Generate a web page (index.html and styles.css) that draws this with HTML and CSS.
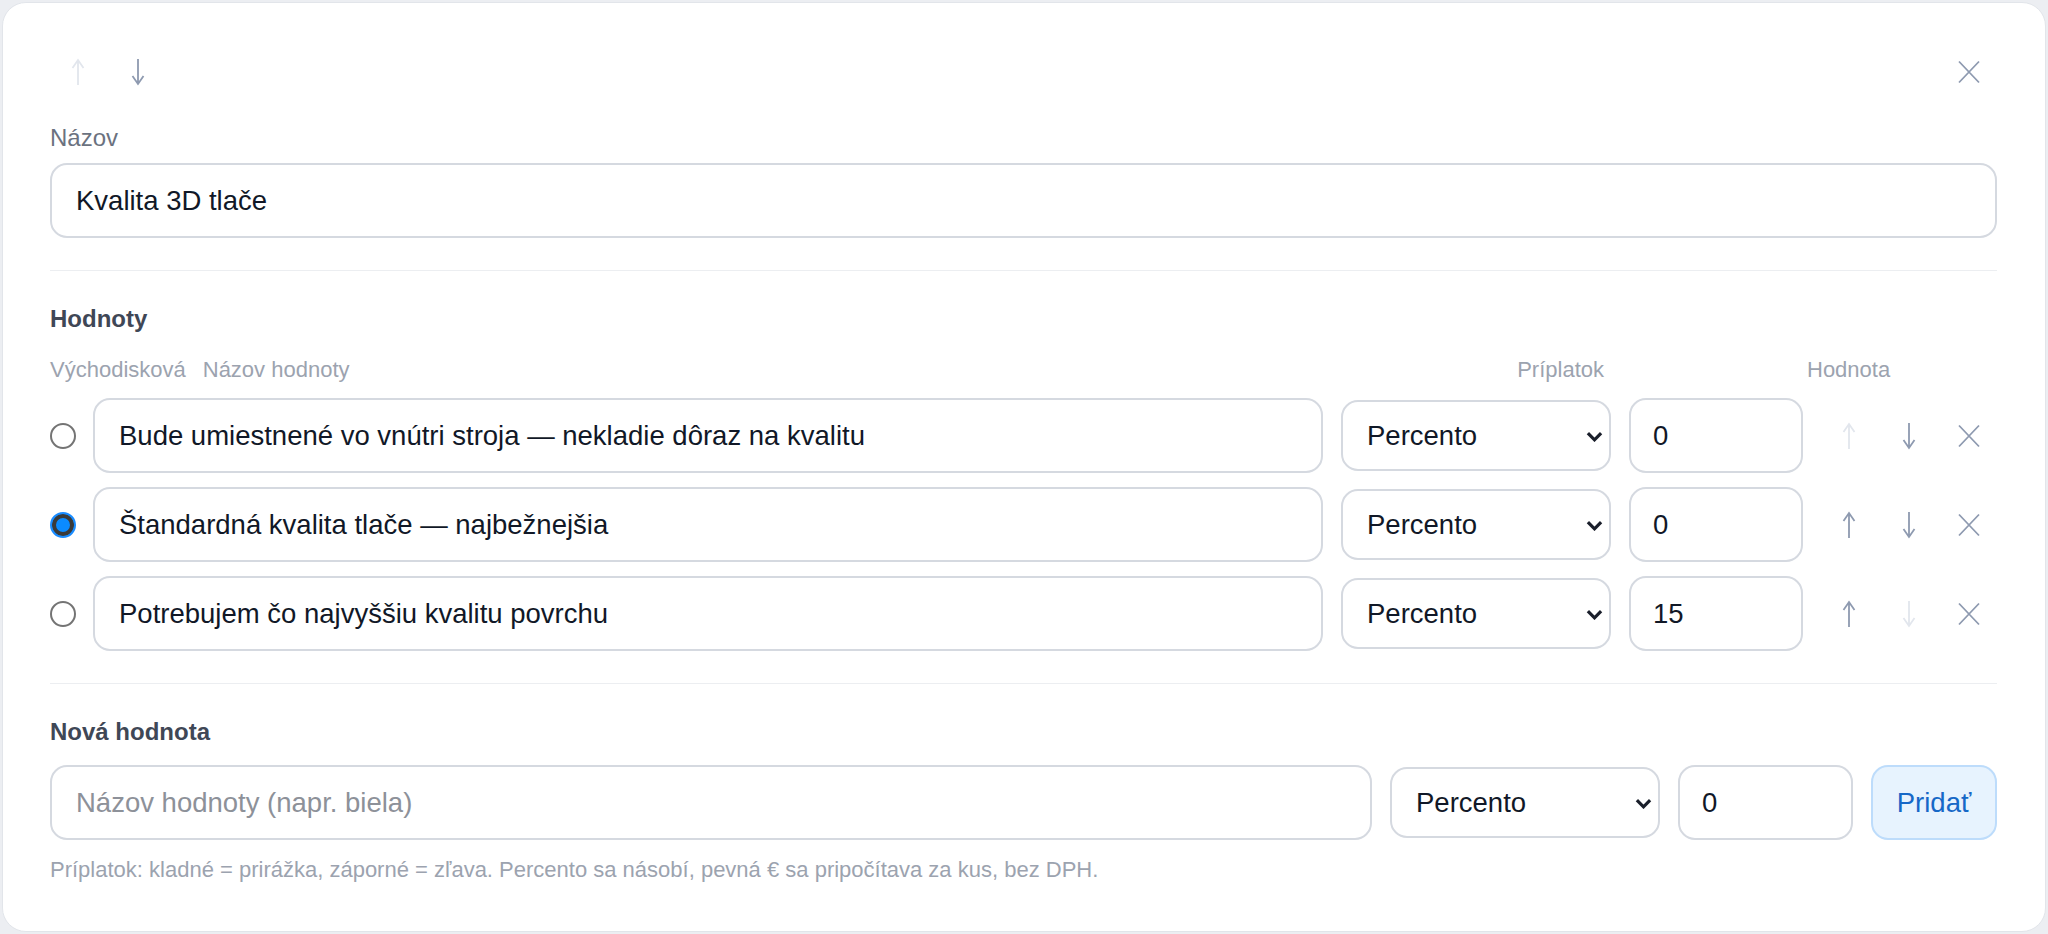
FILE: index.html
```html
<!DOCTYPE html>
<html lang="sk">
<head>
  <meta charset="UTF-8">
  <meta name="viewport" content="width=device-width, initial-scale=1.0">
  <title>Vlastnosť - Kvalita 3D tlače</title>
  <link rel="stylesheet" href="styles.css">
</head>
<body>
  <svg class="icons" xmlns="http://www.w3.org/2000/svg">
    <symbol id="i-up" viewBox="0 0 14 28">
      <path d="M7 27V2M1.5 10L7 2l5.5 8" fill="none" stroke="currentColor" stroke-width="1.8"/>
    </symbol>
    <symbol id="i-down" viewBox="0 0 14 28">
      <path d="M7 1v25M1.5 18L7 26l5.5-8" fill="none" stroke="currentColor" stroke-width="1.8"/>
    </symbol>
    <symbol id="i-close" viewBox="0 0 24 24">
      <path d="M2 1.5l20 21M22 1.5l-20 21" fill="none" stroke="currentColor" stroke-width="1.8"/>
    </symbol>
    <symbol id="i-chevron" viewBox="0 0 18 11">
      <path d="M2 2l7 7 7-7" fill="none" stroke="currentColor" stroke-width="3.4"/>
    </symbol>
  </svg>

  <div class="card">
    <div class="toolbar">
      <div class="move">
        <button class="icon-btn" disabled><svg class="arrow"><use href="#i-up"/></svg></button>
        <button class="icon-btn"><svg class="arrow"><use href="#i-down"/></svg></button>
      </div>
      <button class="icon-btn"><svg class="close"><use href="#i-close"/></svg></button>
    </div>

    <label class="field-label" for="attrName">Názov</label>
    <input class="field" id="attrName" type="text" value="Kvalita 3D tlače">

    <hr class="sep">

    <h3 class="section-title">Hodnoty</h3>
    <div class="cols">
      <span class="col-default">Východisková</span>
      <span class="col-name">Názov hodnoty</span>
      <span class="col-fee">Príplatok</span>
      <span class="col-value">Hodnota</span>
    </div>

    <div class="rows">
      <div class="row">
        <input class="radio" type="radio" name="default">
        <input class="field" type="text" value="Bude umiestnené vo vnútri stroja — nekladie dôraz na kvalitu">
        <div class="select-wrap">
          <select class="field select"><option>Percento</option><option>Pevná €</option></select>
          <svg class="chevron"><use href="#i-chevron"/></svg>
        </div>
        <input class="field num" type="number" value="0">
        <div class="actions">
          <button class="icon-btn" disabled><svg class="arrow"><use href="#i-up"/></svg></button>
          <button class="icon-btn"><svg class="arrow"><use href="#i-down"/></svg></button>
          <button class="icon-btn"><svg class="close"><use href="#i-close"/></svg></button>
        </div>
      </div>
      <div class="row">
        <input class="radio" type="radio" name="default" checked>
        <input class="field" type="text" value="Štandardná kvalita tlače — najbežnejšia">
        <div class="select-wrap">
          <select class="field select"><option>Percento</option><option>Pevná €</option></select>
          <svg class="chevron"><use href="#i-chevron"/></svg>
        </div>
        <input class="field num" type="number" value="0">
        <div class="actions">
          <button class="icon-btn"><svg class="arrow"><use href="#i-up"/></svg></button>
          <button class="icon-btn"><svg class="arrow"><use href="#i-down"/></svg></button>
          <button class="icon-btn"><svg class="close"><use href="#i-close"/></svg></button>
        </div>
      </div>
      <div class="row">
        <input class="radio" type="radio" name="default">
        <input class="field" type="text" value="Potrebujem čo najvyššiu kvalitu povrchu">
        <div class="select-wrap">
          <select class="field select"><option>Percento</option><option>Pevná €</option></select>
          <svg class="chevron"><use href="#i-chevron"/></svg>
        </div>
        <input class="field num" type="number" value="15">
        <div class="actions">
          <button class="icon-btn"><svg class="arrow"><use href="#i-up"/></svg></button>
          <button class="icon-btn" disabled><svg class="arrow"><use href="#i-down"/></svg></button>
          <button class="icon-btn"><svg class="close"><use href="#i-close"/></svg></button>
        </div>
      </div>
    </div>

    <hr class="sep">

    <h3 class="section-title">Nová hodnota</h3>
    <div class="new-row">
      <input class="field" type="text" placeholder="Názov hodnoty (napr. biela)">
      <div class="select-wrap">
        <select class="field select"><option>Percento</option><option>Pevná €</option></select>
        <svg class="chevron"><use href="#i-chevron"/></svg>
      </div>
      <input class="field num" type="number" value="0">
      <button class="btn-add">Pridať</button>
    </div>
    <p class="hint">Príplatok: kladné = prirážka, záporné = zľava. Percento sa násobí, pevná € sa pripočítava za kus, bez DPH.</p>
  </div>
</body>
</html>
```

FILE: styles.css
```css
* { box-sizing: border-box; }
body {
  margin: 0;
  padding: 2px;
  height: 100vh;
  background: #eceef2;
  font-family: 'Liberation Sans', Arial, sans-serif;
}
.icons { position: absolute; width: 0; height: 0; overflow: hidden; }

.card {
  height: 100%;
  background: #fff;
  border: 1px solid #e2e5ea;
  border-radius: 24px;
  padding: 41px 48px 0 47px;
}

/* header with move / close buttons */
.toolbar { display: flex; justify-content: space-between; align-items: center; height: 56px; }
.move { display: flex; gap: 4px; }
.icon-btn {
  width: 56px;
  height: 56px;
  padding: 0;
  border: none;
  background: none;
  color: #8e9ab0;
  display: grid;
  place-items: center;
  cursor: pointer;
}
.icon-btn:disabled { color: #e2e6ed; cursor: default; }
.arrow { width: 14px; height: 28px; }
.close { width: 24px; height: 24px; }

.field-label {
  display: block;
  margin-top: 24px;
  font-size: 24px;
  line-height: 28px;
  color: #6b7280;
}
.field {
  height: 75px;
  width: 100%;
  min-width: 0;
  padding: 0 24px;
  font-family: inherit;
  font-size: 27.5px;
  color: #111827;
  background: #fff;
  border: 2px solid #d5d9e0;
  border-radius: 17px;
  outline: none;
}
.field::placeholder { color: #8d9199; }
#attrName { margin-top: 11px; display: block; }

.sep { border: 0; border-top: 1px solid #eceef1; margin: 32px 0 0 0; }

.section-title {
  margin: 34px 0 0 0;
  font-size: 24px;
  line-height: 28px;
  font-weight: bold;
  color: #3f4756;
}

.cols {
  display: flex;
  margin-top: 24px;
  font-size: 22px;
  line-height: 26px;
  color: #9ca3af;
}
.col-default { margin-right: 17px; }
.col-name { flex: 1; }
.col-fee { width: 270px; text-align: right; padding-right: 2px; }
.col-value { width: 391px; padding-left: 201px; }

.rows { display: flex; flex-direction: column; gap: 14px; margin-top: 15px; }
.row {
  display: grid;
  grid-template-columns: 25px 1fr 270px 174px 176px;
  column-gap: 18px;
  align-items: center;
}

.radio {
  appearance: none;
  -webkit-appearance: none;
  width: 26px;
  height: 26px;
  margin: 0;
  border: 2px solid #747474;
  border-radius: 50%;
  background: #fff;
}
.radio:checked {
  border-color: #1a8cff;
  background: #0b8bff;
  box-shadow: inset 0 0 0 4px #3a3a3a;
}

.select-wrap { position: relative; }
.select {
  appearance: none;
  -webkit-appearance: none;
  height: 71px;
  display: block;
  padding-right: 50px;
}
.chevron {
  position: absolute;
  right: 8px;
  top: 31px;
  width: 17px;
  height: 11px;
  color: #1a1f2b;
  pointer-events: none;
}
.num { padding: 0 22px; -moz-appearance: textfield; }
.num::-webkit-inner-spin-button,
.num::-webkit-outer-spin-button { -webkit-appearance: none; margin: 0; }

.actions { display: flex; gap: 4px; justify-content: flex-end; }

.new-row {
  display: grid;
  grid-template-columns: 1fr 270px 175px 126px;
  column-gap: 18px;
  align-items: center;
  margin-top: 19px;
}
.btn-add {
  height: 75px;
  font-family: inherit;
  font-size: 27.5px;
  color: #1668c7;
  background: #e7f3fe;
  border: 2px solid #bddcfb;
  border-radius: 17px;
  cursor: pointer;
}
.btn-add:hover { background: #d8ebfd; }

.hint {
  margin: 17px 0 0 0;
  font-size: 22px;
  line-height: 26px;
  color: #9ca3af;
}
```
